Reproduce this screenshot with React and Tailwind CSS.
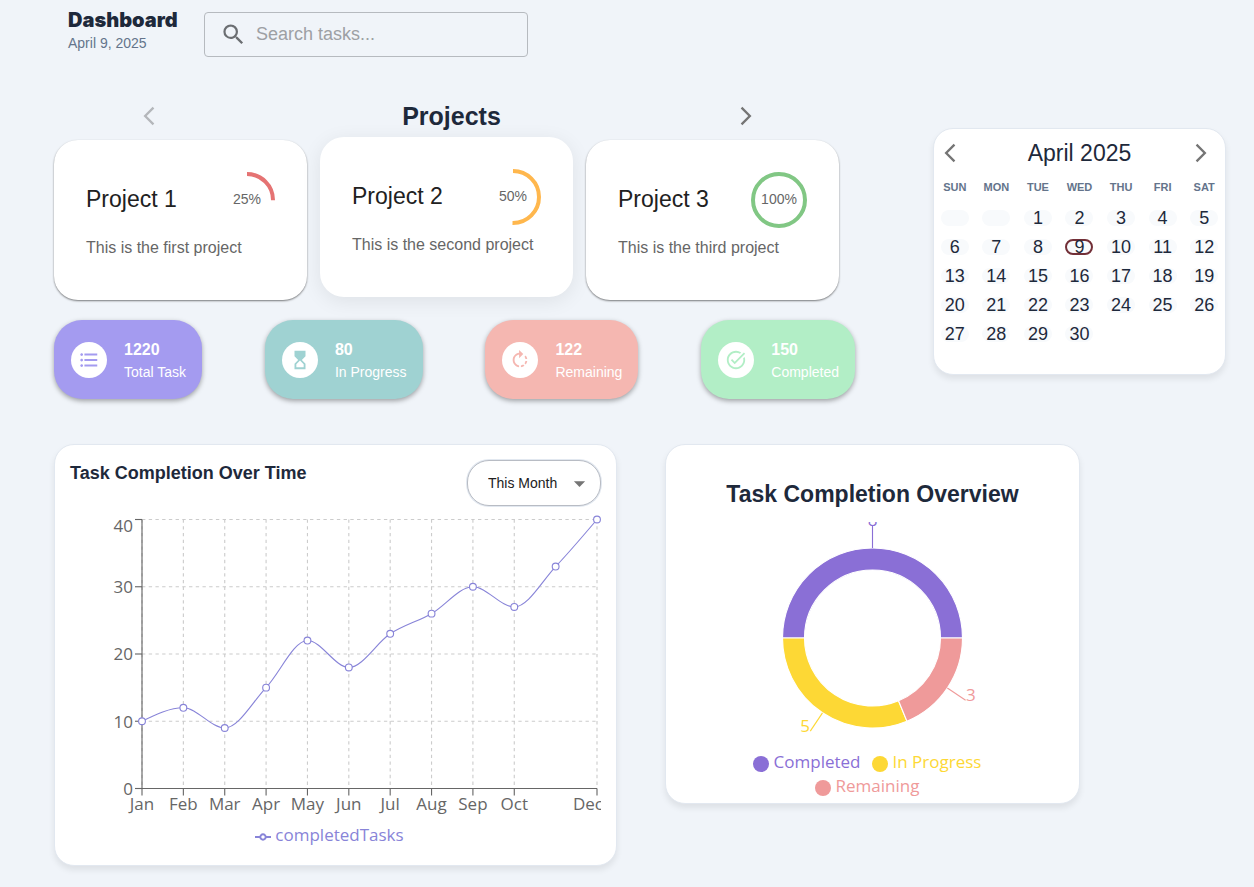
import React from "react";
import {
  MdArrowBackIosNew,
  MdArrowDropDown,
  MdArrowForwardIos,
  MdFormatListBulleted,
  MdHourglassTop,
  MdRotateRight,
  MdSearch,
  MdTaskAlt,
} from "react-icons/md";

const projects = [
  { name: "Project 1", text: "This is the first project", percent: 25, color: "#e57373", active: false },
  { name: "Project 2", text: "This is the second project", percent: 50, color: "#ffb74d", active: true },
  { name: "Project 3", text: "This is the third project", percent: 100, color: "#81c784", active: false },
];

const stats = [
  { value: 1220, label: "Total Task", Icon: MdFormatListBulleted, bg: "bg-[#a49bf0]", fg: "text-[#a49bf0]" },
  { value: 80, label: "In Progress", Icon: MdHourglassTop, bg: "bg-[#9fd2d2]", fg: "text-[#9fd2d2]" },
  { value: 122, label: "Remaining", Icon: MdRotateRight, bg: "bg-[#f5b7b1]", fg: "text-[#f5b7b1]" },
  { value: 150, label: "Completed", Icon: MdTaskAlt, bg: "bg-[#b2eec6]", fg: "text-[#b2eec6]" },
];

const weekdays = ["SUN", "MON", "TUE", "WED", "THU", "FRI", "SAT"];
const weeks = [
  [0, 0, 1, 2, 3, 4, 5],
  [6, 7, 8, 9, 10, 11, 12],
  [13, 14, 15, 16, 17, 18, 19],
  [20, 21, 22, 23, 24, 25, 26],
  [27, 28, 29, 30],
];
const today = 9;

const months = ["Jan", "Feb", "Mar", "Apr", "May", "Jun", "Jul", "Aug", "Sep", "Oct", "Nov", "Dec"];
const completedTasks = [10, 12, 9, 15, 22, 18, 23, 26, 30, 27, 33, 40];

function Progress({ percent, color }) {
  const length = 2 * Math.PI * 26;
  return (
    <div className="grid size-14 shrink-0 place-items-center">
      <svg viewBox="0 0 56 56" className="col-start-1 row-start-1 size-14 -rotate-90" aria-hidden="true">
        <circle
          cx="28"
          cy="28"
          r="26"
          fill="none"
          stroke={color}
          strokeWidth="4"
          strokeDasharray={`${(length * percent) / 100} ${length}`}
        />
      </svg>
      <span className="col-start-1 row-start-1 pb-0.5 text-sm text-[#666]">{percent}%</span>
    </div>
  );
}

function Projects() {
  return (
    <section className="pr-4">
      <div className="mb-1 flex items-center justify-between pr-[73px] pl-[75px]">
        <button type="button" aria-label="Previous projects" disabled className="mr-2 grid size-10 place-items-center text-[#b4b7bb]">
          <MdArrowBackIosNew size={22} />
        </button>
        <h2 className="pt-0.5 text-[25px] font-bold text-[#1e293b]">Projects</h2>
        <button type="button" aria-label="Next projects" className="grid size-10 place-items-center text-[#757575]">
          <MdArrowForwardIos size={22} />
        </button>
      </div>
      <div className="grid grid-cols-3 gap-[13px]">
        {projects.map((p) => (
          <article
            key={p.name}
            className={
              p.active
                ? "-translate-y-[3px] rounded-3xl bg-white px-8 pt-8 pb-10 shadow-[0_4px_20px_rgba(0,0,0,0.08)]"
                : "rounded-3xl bg-white px-8 pt-8 pb-10 shadow-[0_1px_2px_rgba(0,0,0,0.5)]"
            }
          >
            <div className="flex items-center justify-between">
              <h3 className="pb-0.5 text-[23px] text-[#212121]">{p.name}</h3>
              <Progress percent={p.percent} color={p.color} />
            </div>
            <p className="mt-2 text-base whitespace-nowrap text-[#666]">{p.text}</p>
          </article>
        ))}
      </div>
    </section>
  );
}

function Stats() {
  return (
    <section className="mt-5 flex justify-between">
      {stats.map(({ value, label, Icon, bg, fg }) => (
        <div
          key={label}
          className={`flex h-[79px] items-center gap-[17px] rounded-[28px] pr-4 pl-[17px] text-white shadow-[0_2px_5px_rgba(0,0,0,0.35)] ${bg}`}
        >
          <span className={`grid size-9 place-items-center rounded-full bg-white ${fg}`}>
            <Icon size={22} />
          </span>
          <div className="pt-0.5">
            <p className="text-base leading-[22px] font-bold">{value}</p>
            <p className="text-sm leading-[22px]">{label}</p>
          </div>
        </div>
      ))}
    </section>
  );
}

function Calendar() {
  return (
    <section className="mt-8 w-[293px] shrink-0 rounded-[20px] border border-[#e2e8f0] bg-white pt-2 pb-[26px] text-[#1e293b] shadow-[0_4px_6px_rgba(0,0,0,0.08)]">
      <div className="flex h-8 items-center pr-2">
        <button type="button" aria-label="Previous month" className="mr-2 grid size-8 place-items-center text-[#757575]">
          <MdArrowBackIosNew size={22} />
        </button>
        <h2 className="flex-1 text-center text-[23px]">April 2025</h2>
        <button type="button" aria-label="Next month" className="grid size-8 place-items-center text-[#757575]">
          <MdArrowForwardIos size={22} />
        </button>
      </div>
      <table className="w-full table-fixed border-collapse text-center">
        <thead>
          <tr className="h-[34px]">
            {weekdays.map((d) => (
              <th key={d} scope="col" className="p-0 pt-[3px] text-[11px] font-bold text-[#64748b]">
                {d}
              </th>
            ))}
          </tr>
        </thead>
        <tbody>
          {weeks.map((week, w) => (
            <tr key={w} className="h-[29px]">
              {week.map((day, i) => (
                <td key={i} className="p-0">
                  {day === 0 ? (
                    <span className="mx-auto block h-4 w-7 rounded-full bg-[#f8fafc]" />
                  ) : (
                    <button
                      type="button"
                      className={
                        day === today
                          ? "mx-auto flex h-4 w-7 items-center justify-center rounded-full border-2 border-[#722f37] bg-[#f8fafc] text-lg"
                          : "mx-auto flex h-4 w-7 items-center justify-center rounded-full bg-[#f8fafc] text-lg"
                      }
                    >
                      {day}
                    </button>
                  )}
                </td>
              ))}
            </tr>
          ))}
        </tbody>
      </table>
    </section>
  );
}

const LEFT = 72;
const BASE = 282.5;
const points = completedTasks.map((v, i) => [LEFT + (i * 455) / 11, BASE - v * 6.725]);

// Monotone cubic interpolation, so the curve never overshoots a data point.
function monotonePath(pts) {
  const slopes = pts.slice(1).map(([x, y], i) => (y - pts[i][1]) / (x - pts[i][0]));
  const tangents = pts.map((_, i) => {
    if (i === 0 || i === pts.length - 1) return null;
    const a = slopes[i - 1];
    const b = slopes[i];
    return (Math.sign(a) + Math.sign(b)) * Math.min(Math.abs(a), Math.abs(b), 0.5 * Math.abs((a + b) / 2));
  });
  const last = pts.length - 1;
  tangents[0] = (3 * slopes[0] - tangents[1]) / 2;
  tangents[last] = (3 * slopes[last - 1] - tangents[last - 1]) / 2;
  let d = `M${pts[0][0]},${pts[0][1]}`;
  for (let i = 0; i < last; i++) {
    const [x0, y0] = pts[i];
    const [x1, y1] = pts[i + 1];
    const dx = (x1 - x0) / 3;
    d += `C${x0 + dx},${y0 + dx * tangents[i]},${x1 - dx},${y1 - dx * tangents[i + 1]},${x1},${y1}`;
  }
  return d;
}

function LineChart() {
  const right = points[11][0];
  return (
    <svg viewBox="0 0 531 312" className="block w-full overflow-hidden font-['Open_Sans',sans-serif] text-[17px]" role="img" aria-label="Completed tasks by month">
      <g stroke="#ccc" strokeWidth="1.12" strokeDasharray="3.36 3.36">
        {[10, 20, 30, 40].map((v) => (
          <line key={v} x1={LEFT} x2={right} y1={BASE - v * 6.725} y2={BASE - v * 6.725} />
        ))}
        {points.map(([x], i) => i !== 10 && <line key={i} x1={x} x2={x} y1={BASE - 269} y2={BASE} />)}
      </g>
      <g stroke="#666" strokeWidth="1.12">
        <line x1={LEFT} x2={right} y1={BASE} y2={BASE} />
        <line x1={LEFT} x2={LEFT} y1={BASE - 269} y2={BASE} />
        {[0, 10, 20, 30, 40].map((v) => (
          <line key={v} x1={LEFT - 7} x2={LEFT} y1={BASE - v * 6.725} y2={BASE - v * 6.725} />
        ))}
        {points.map(([x], i) => i !== 10 && <line key={i} x1={x} x2={x} y1={BASE} y2={BASE + 7} />)}
      </g>
      <g fill="#666" textAnchor="end">
        <text x="63" y="289">0</text>
        <text x="63" y="222">10</text>
        <text x="63" y="154">20</text>
        <text x="63" y="87">30</text>
        <text x="63" y="26">40</text>
      </g>
      <g fill="#666" textAnchor="middle">
        {months.map((m, i) => i !== 10 && (
          <text key={m} x={i === 11 ? 518 : points[i][0]} y="304">
            {m}
          </text>
        ))}
      </g>
      <path d={monotonePath(points)} fill="none" stroke="#8884d8" strokeWidth="1.12" />
      {points.map(([x, y], i) => (
        <circle key={i} cx={x} cy={y} r="3.4" fill="#fff" stroke="#8884d8" strokeWidth="1.12" />
      ))}
    </svg>
  );
}

function OverTime() {
  return (
    <section className="rounded-[20px] border border-[#e2e8f0] bg-white p-[15px] shadow-[0_4px_6px_rgba(0,0,0,0.08)]">
      <div className="flex items-start justify-between">
        <h2 className="text-lg leading-[26px] font-bold text-[#1e293b]">Task Completion Over Time</h2>
        <div className="grid items-center">
          <select
            aria-label="Period"
            defaultValue="This Month"
            className="col-start-1 row-start-1 h-[46px] w-[134px] appearance-none rounded-[22px] border border-[#b8bcc4] bg-white pl-5 text-sm text-[#212121] shadow-[0_0_0_1px_#e2e8f0]"
          >
            <option>This Month</option>
          </select>
          <MdArrowDropDown size={27} className="pointer-events-none z-10 col-start-1 row-start-1 mr-2 justify-self-end text-[#757575]" />
        </div>
      </div>
      <LineChart />
      <div className="mt-1 flex h-7 items-center justify-center gap-1 pr-3 pb-0.5 font-['Open_Sans',sans-serif] text-[17px] text-[#8884d8]">
        <svg viewBox="0 0 32 32" className="mt-1 size-4" fill="none" stroke="currentColor" strokeWidth="4" aria-hidden="true">
          <path d="M0,16h10.67A5.33,5.33,0,1,1,21.33,16H32M21.33,16A5.33,5.33,0,1,1,10.67,16" />
        </svg>
        completedTasks
      </div>
    </section>
  );
}

const polar = (r, deg) => [206.5 + r * Math.cos((deg * Math.PI) / 180), 116 - r * Math.sin((deg * Math.PI) / 180)];

function sector(from, to) {
  const [ax, ay] = polar(90, from);
  const [bx, by] = polar(90, to);
  const [cx, cy] = polar(68, to);
  const [dx, dy] = polar(68, from);
  return `M${ax},${ay}A90,90,0,0,0,${bx},${by}L${cx},${cy}A68,68,0,0,1,${dx},${dy}Z`;
}

const slices = [
  { from: 0, to: 180, color: "#8a6fd6", value: 8, anchor: "middle", tx: 206.5, ty: 4 },
  { from: 180, to: 292.5, color: "#fdd835", value: 5, anchor: "end", tx: 144, ty: 210 },
  { from: 292.5, to: 360, color: "#ef9a9a", value: 3, anchor: "start", tx: 300, ty: 179 },
];

function Overview() {
  return (
    <section className="rounded-[20px] border border-[#e2e8f0] bg-white pt-[33px] pb-[5px] shadow-[0_4px_6px_rgba(0,0,0,0.08)]">
      <h2 className="text-center text-[23px] leading-8 font-bold text-[#1e293b]">Task Completion Overview</h2>
      <svg viewBox="0 0 413 228" className="mt-3 block w-full overflow-hidden font-['Open_Sans',sans-serif] text-[17px]" role="img" aria-label="Tasks by status">
        {slices.map((s) => {
          const mid = (s.from + s.to) / 2;
          const [x1, y1] = polar(90, mid);
          const [x2, y2] = polar(112, mid);
          return (
            <g key={s.value}>
              <path d={sector(s.from, s.to)} fill={s.color} stroke="#fff" strokeWidth="1.12" />
              <line x1={x1} y1={y1} x2={x2} y2={y2} stroke={s.color} strokeWidth="1.12" />
              <text x={s.tx} y={s.ty} textAnchor={s.anchor} fill={s.color}>
                {s.value}
              </text>
            </g>
          );
        })}
      </svg>
      <ul className="mx-auto flex max-w-[320px] flex-wrap justify-center font-['Open_Sans',sans-serif] text-[17px] leading-6">
        <li className="mr-[11px] flex items-center gap-[5px] text-[#8a6fd6]">
          <span className="mt-1 size-4 rounded-full bg-current" />
          Completed
        </li>
        <li className="mr-[11px] flex items-center gap-[5px] text-[#fdd835]">
          <span className="mt-1 size-4 rounded-full bg-current" />
          In Progress
        </li>
        <li className="mr-[11px] flex items-center gap-[5px] text-[#ef9a9a]">
          <span className="mt-1 size-4 rounded-full bg-current" />
          Remaining
        </li>
      </ul>
    </section>
  );
}

export default function App() {
  return (
    <div className="min-h-screen bg-[#f0f4f9] pt-2 pr-7 pb-5 pl-[54px] font-['Liberation_Sans',Arial,sans-serif]">
      <header className="flex items-start pl-[14px]">
        <div className="w-[136px]">
          <h1 className="font-['Inter',sans-serif] text-xl leading-6 font-black text-[#1e293b]">Dashboard</h1>
          <p className="text-sm leading-[22px] text-[#64748b]">April 9, 2025</p>
        </div>
        <label className="mt-1 flex h-[45px] w-[324px] items-center gap-[9px] rounded border border-[#b6babf] pl-[15px]">
          <MdSearch size={27} className="shrink-0 text-[#6b6e72]" />
          <input
            type="search"
            aria-label="Search tasks"
            placeholder="Search tasks..."
            className="w-full min-w-0 bg-transparent pr-3 pb-0.5 text-lg text-[#212121] outline-none placeholder:text-[#9da0a4]"
          />
        </label>
      </header>
      <main>
        <div className="mt-[39px] flex items-start gap-[78px]">
          <div className="min-w-0 flex-1">
            <Projects />
            <Stats />
          </div>
          <Calendar />
        </div>
        <div className="mt-[45px] grid grid-cols-[563fr_415fr] items-start gap-12 pr-[146px]">
          <OverTime />
          <Overview />
        </div>
      </main>
    </div>
  );
}
